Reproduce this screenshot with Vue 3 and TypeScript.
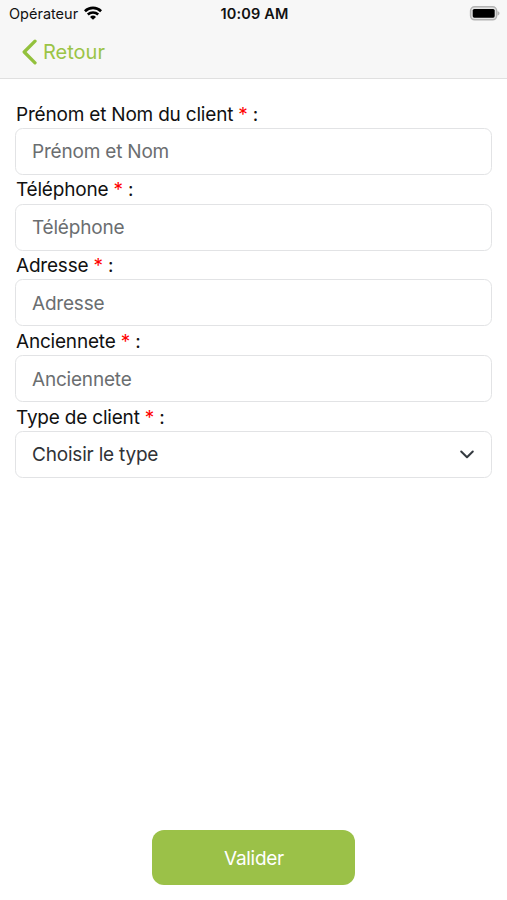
<script setup lang="ts">
import { ref } from 'vue'

interface Field {
  id: string
  label: string
  placeholder: string
  type: string
}

const fields: Field[] = [
  { id: 'name', label: 'Prénom et Nom du client', placeholder: 'Prénom et Nom', type: 'text' },
  { id: 'phone', label: 'Téléphone', placeholder: 'Téléphone', type: 'tel' },
  { id: 'address', label: 'Adresse', placeholder: 'Adresse', type: 'text' },
  { id: 'seniority', label: 'Anciennete', placeholder: 'Anciennete', type: 'text' },
]

const values = ref<Record<string, string>>({ name: '', phone: '', address: '', seniority: '' })
</script>

<template>
  <div class="screen">
    <header class="header">
      <div class="status">
        <div class="carrier">
          <span>Opérateur</span>
          <svg class="wifi" viewBox="0 0 18 14" width="18" height="14" fill="none" stroke="#000">
            <path d="M0.900 5.200a11.700 11.700 0 0 1 16.200 0" stroke-width="2.700" />
            <path d="M3.800 8.500a7.500 7.500 0 0 1 10.400 0" stroke-width="2.500" />
            <path d="M9 13.800 6 10.900a4.300 4.300 0 0 1 6 0z" fill="#000" stroke="none" />
          </svg>
        </div>
        <time class="clock">10:09 AM</time>
        <svg class="battery" viewBox="0 0 31 15" width="31" height="15">
          <rect x="1.600" y="0.800" width="26" height="13" rx="4" fill="#e4e4e4" stroke="#b3b3b3" stroke-width="1.500" />
          <rect x="3.700" y="2.900" width="22" height="8.800" rx="1.600" fill="#000" />
          <path d="M28.500 5c1.200.5 2 1.200 2 2.300s-.8 1.800-2 2.300z" fill="#b3b3b3" />
        </svg>
      </div>
      <button class="back" type="button">
        <svg viewBox="0 0 16 26" width="16" height="26" fill="none" stroke="#93c13d" stroke-width="3.300" stroke-linecap="round" stroke-linejoin="round">
          <path d="M14 2.200 3.200 13 14 23.800" />
        </svg>
        <span>Retour</span>
      </button>
    </header>

    <form class="form" @submit.prevent>
      <div v-for="field in fields" :key="field.id" class="group">
        <label :for="field.id">{{ field.label }} <span class="star">*</span> :</label>
        <input :id="field.id" v-model="values[field.id]" class="control" :type="field.type" :placeholder="field.placeholder" />
      </div>
      <div class="group">
        <label>Type de client <span class="star">*</span> :</label>
        <div class="control select" role="combobox" tabindex="0">
          <span>Choisir le type</span>
          <svg viewBox="0 0 16 10" width="16" height="10" fill="none" stroke="#343a40" stroke-width="2" stroke-linecap="round" stroke-linejoin="round">
            <path d="m2.200 1.500 5.800 5.800 5.800-5.800" />
          </svg>
        </div>
      </div>
    </form>

    <footer class="footer">
      <button class="submit" type="button">Valider</button>
    </footer>
  </div>
</template>

<style>
body {
  background: #fff;
}
</style>

<style scoped>
.screen {
  display: flex;
  flex-direction: column;
  box-sizing: border-box;
  height: 900px;
  font-family: Inter, "Liberation Sans", sans-serif;
  color: #111;
}
.header {
  box-sizing: border-box;
  height: 79px;
  background: #f7f7f7;
  border-bottom: 1px solid #e0e0e0;
}
.status {
  display: grid;
  grid-template-columns: 1fr auto 1fr;
  align-items: center;
  height: 27px;
  padding: 0 7px 0 9px;
  font-size: 14.5px;
}
.carrier {
  display: flex;
  align-items: center;
  gap: 6px;
}
.wifi {
  margin-top: -2px;
}
.clock {
  font-weight: 600;
  letter-spacing: 0.15px;
}
.battery {
  justify-self: end;
  margin-top: -1px;
}
.back {
  display: flex;
  align-items: center;
  gap: 6px;
  height: 50px;
  padding: 0 0 0 21px;
  border: 0;
  background: none;
  font: inherit;
  font-size: 20px;
  color: #9bc446;
}
.form {
  padding: 20px 15px 0;
}
label {
  display: block;
  box-sizing: border-box;
  height: 28.8px;
  padding: 1.6px 0 0 1px;
  font-size: 19px;
  line-height: 28.3px;
  letter-spacing: -0.2px;
}
.star {
  color: #f00;
}
.control {
  display: block;
  box-sizing: border-box;
  width: 100%;
  height: 47px;
  padding: 1px 16px 0;
  border: 1px solid #e2e3e5;
  border-radius: 7.500px;
  background: #fff;
  font-family: inherit;
  font-size: 19px;
  letter-spacing: -0.2px;
  color: #303337;
  outline: none;
}
.control::placeholder {
  color: #6b6e70;
  opacity: 1;
}
.select {
  display: flex;
  align-items: center;
  justify-content: space-between;
}
.footer {
  display: flex;
  justify-content: center;
  margin-top: auto;
  padding-bottom: 15px;
}
.submit {
  width: 203px;
  height: 55px;
  padding: 1px 0 0 1px;
  border: 0;
  border-radius: 12px;
  background: #9bc148;
  font-family: inherit;
  font-size: 19px;
  letter-spacing: -0.3px;
  color: #fff;
}
</style>
